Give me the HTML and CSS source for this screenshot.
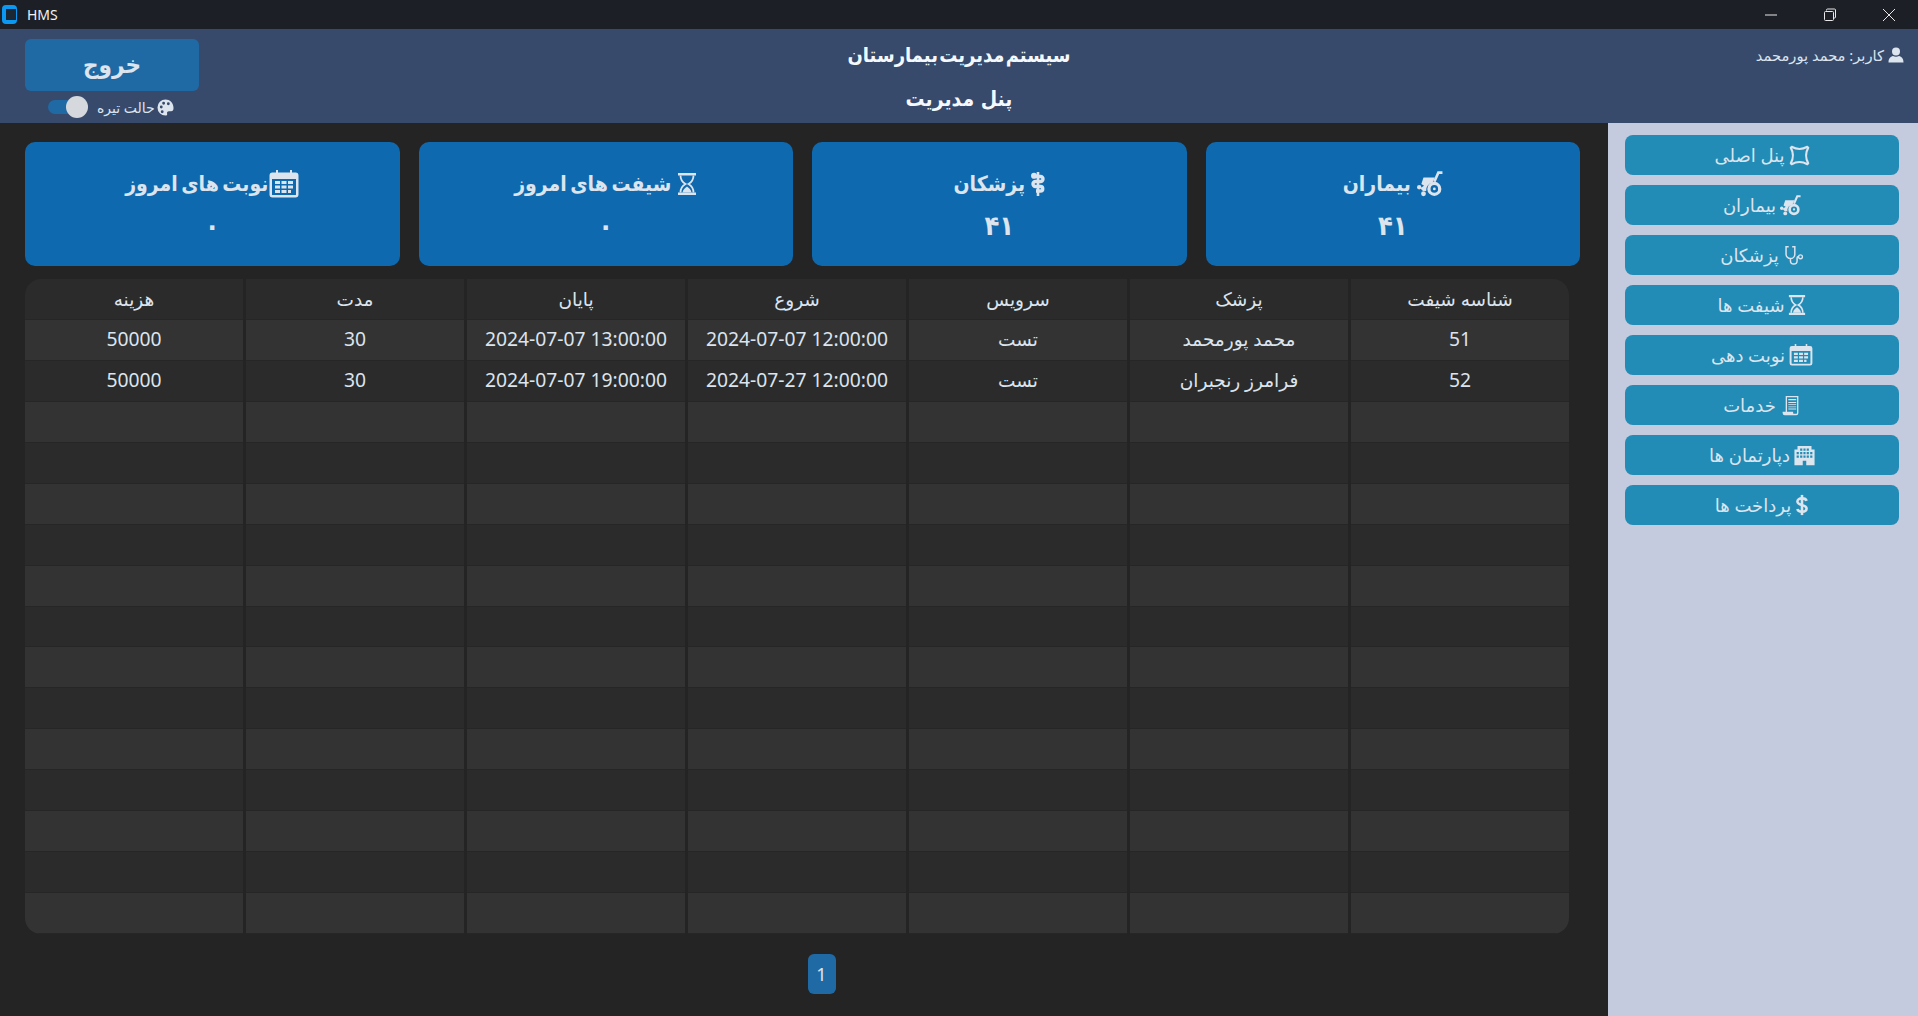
FILE: index.html
```html
<!DOCTYPE html>
<html lang="fa">
<head>
    <meta charset="UTF-8">
    <title>HMS</title>
    <link rel="stylesheet" href="styles.css">
</head>
<body>
    <!-- Icon set -->
    <svg class="icon-defs" width="0" height="0">
        <symbol id="i-burst" viewBox="0 0 24 24">
            <path d="M3 2Q12 7 21 2M22 3Q17 12 22 21M21 22Q12 17 3 22M2 21Q7 12 2 3" fill="none" stroke="currentColor" stroke-width="2.400" stroke-linecap="round"/>
        </symbol>
        <symbol id="i-wheelchair" viewBox="0 0 24 24">
            <path d="M23.500 1.500h-3.800L16 10" fill="none" stroke="currentColor" stroke-width="2.400"/>
            <path d="M6 6h10.500l-2.300 5a6.500 6.500 0 0 0-5.700 7.500H5.500L3 16l3.500-2.500L4 12z" fill="currentColor"/>
            <circle cx="16" cy="16.500" r="5" fill="none" stroke="currentColor" stroke-width="3"/>
            <circle cx="16" cy="16.500" r="1.300" fill="currentColor"/>
            <circle cx="2" cy="15" r="2" fill="currentColor"/>
            <circle cx="6" cy="21" r="2.200" fill="currentColor"/>
        </symbol>
        <symbol id="i-staff" viewBox="0 0 14 24">
            <path d="M7 0v24" stroke="currentColor" stroke-width="2.600"/>
            <path d="M1 4.500h8.500a2.300 2.300 0 0 1 0 5H4.500a2.300 2.300 0 0 0 0 5h5a2 2 0 0 1 0 4.500H5" fill="none" stroke="currentColor" stroke-width="3.400"/>
            <circle cx="3" cy="3.800" r="3" fill="currentColor"/>
        </symbol>
        <symbol id="i-stethoscope" viewBox="0 0 24 24">
            <path d="M6.500 2H3.500v8.500a5 5 0 0 0 10 0V2h-3M8.500 15.500V18a3.800 3.800 0 0 0 7.600 0v-3a2 2 0 0 1 1.500-2" fill="none" stroke="currentColor" stroke-width="1.700"/>
            <circle cx="20" cy="13.500" r="2.200" fill="none" stroke="currentColor" stroke-width="1.500"/>
        </symbol>
        <symbol id="i-hourglass" viewBox="0 0 20 24">
            <path d="M1 1h18v2.500H1zM1 20.500h18V23H1z" fill="currentColor"/>
            <path d="M3.500 3.500c0 4 1.500 6.500 5 8.500-3.500 2-5 4.500-5 8.500M16.500 3.500c0 4-1.500 6.500-5 8.500 3.500 2 5 4.500 5 8.500" fill="none" stroke="currentColor" stroke-width="1.800"/>
            <path d="M5.500 20.500c.5-3 2.500-4.500 4.500-6 2 1.500 4 3 4.500 6z" fill="currentColor"/>
        </symbol>
        <symbol id="i-calendar" viewBox="0 0 30 28">
            <path d="M3.500 2.500h23a3 3 0 0 1 3 3v19a3 3 0 0 1-3 3h-23a3 3 0 0 1-3-3v-19a3 3 0 0 1 3-3zM3 9v15.500a.5.500 0 0 0 .5.500h23a.5.500 0 0 0 .5-.5V9z" fill="currentColor" fill-rule="evenodd"/>
            <path d="M8 0v4M22 0v4" stroke="currentColor" stroke-width="2" stroke-linecap="round"/>
            <path d="M6 11h5v3H6zM12.500 11h5v3h-5zM19 11h5v3h-5zM6 15.500h5v3H6zM12.500 15.500h5v3h-5zM19 15.500h5v3h-5zM6 20h5v3H6zM12.500 20h5v3h-5zM19 20h3v3h-3z" fill="currentColor"/>
        </symbol>
        <symbol id="i-receipt" viewBox="0 0 20 24">
            <path d="M4.500 1h14.500v19.500a2.500 2.500 0 0 1-2.500 2.500h-13a2.500 2.500 0 0 1-2.500-2.500V19h3.500zM6 2.500V19h7v1.500c0 .5.200 1 .5 1h3c.5 0 1-.5 1-1v-18z" fill="currentColor" fill-rule="evenodd"/>
            <path d="M7.500 4.500h9v1.500h-9zM7.500 8h9v1h-9zM7.500 10.500h9v1h-9zM7.500 13h9v1h-9zM7.500 15.500h9v1h-9z" fill="currentColor"/>
        </symbol>
        <symbol id="i-building" viewBox="0 0 24 24">
            <path d="M4 1h16v4h3.500v18H14v-5h-4v5H.5V5H4zM7 4v2.500h2.500V4zM10.800 4v2.500h2.400V4zM14.500 4v2.500H17V4zM3 8v2.500h2.500V8zM7 8v2.500h2.500V8zM10.800 8v2.500h2.400V8zM14.500 8v2.500H17V8zM18.500 8v2.500H21V8zM3 12v2.500h2.500V12zM7 12v2.500h2.500V12zM10.800 12v2.500h2.400V12zM14.500 12v2.500H17V12zM18.500 12v2.500H21V12z" fill="currentColor" fill-rule="evenodd"/>
        </symbol>
        <symbol id="i-dollar" viewBox="0 0 14 24">
            <path d="M12 7.500C11.500 5.500 9.500 4.800 7 4.800c-3 0-5 1.300-5 3.500 0 5 10 2.700 10 7.500 0 2.200-2 3.500-5 3.500-2.700 0-4.600-1-5-3" fill="none" stroke="currentColor" stroke-width="2.800"/>
            <path d="M7 1v22" stroke="currentColor" stroke-width="2.800"/>
        </symbol>
        <symbol id="i-palette" viewBox="0 0 18 18">
            <path d="M9 .5a8.500 8.500 0 1 0 0 17c1.500 0 2-1 1.700-2-.4-1.300.3-2.500 2-2.500h2.300c1.500 0 2.500-1.300 2.500-3.500C17.500 4 13.500.5 9 .5zM4.500 7a1.500 1.500 0 1 1 0 3 1.500 1.500 0 0 1 0-3zM7 3a1.500 1.500 0 1 1 0 3 1.500 1.500 0 0 1 0-3zM12 3.500a1.500 1.500 0 1 1 0 3 1.500 1.500 0 0 1 0-3zM5.500 12a1.500 1.500 0 1 1 0 3 1.500 1.500 0 0 1 0-3z" fill="currentColor" fill-rule="evenodd"/>
        </symbol>
        <symbol id="i-user" viewBox="0 0 16 16">
            <circle cx="8" cy="4.500" r="4" fill="currentColor"/>
            <path d="M5 9c-2.500.5-4.500 2.500-4.500 6.500h15C15.500 11.500 13.500 9.500 11 9c-1.500 1-4.500 1-6 0z" fill="currentColor"/>
        </symbol>
    </svg>

    <div class="title-bar">
        <div class="app-name">
            <span class="app-logo"></span>
            <span>HMS</span>
        </div>
        <div class="win-buttons">
            <span class="win-btn">
                <svg width="14" height="14" viewBox="0 0 14 14"><path d="M1 7h12" stroke="#e8e8e8" fill="none"/></svg>
            </span>
            <span class="win-btn">
                <svg width="14" height="14" viewBox="0 0 14 14"><path d="M3.500 2.500V2a1 1 0 0 1 1-1h7a1 1 0 0 1 1 1v7a1 1 0 0 1-1 1h-.5M1.500 4.500a1 1 0 0 1 1-1h7a1 1 0 0 1 1 1v7a1 1 0 0 1-1 1h-7a1 1 0 0 1-1-1z" stroke="#e8e8e8" fill="none"/></svg>
            </span>
            <span class="win-btn">
                <svg width="14" height="14" viewBox="0 0 14 14"><path d="M1 1l12 12M13 1L1 13" stroke="#e8e8e8" fill="none"/></svg>
            </span>
        </div>
    </div>

    <div class="header">
        <div class="header-left">
            <button class="logout-btn">خروج</button>
            <div class="theme-row">
                <span class="switch"><span class="switch-thumb"></span></span>
                <span class="theme-label">حالت تیره</span>
                <svg class="theme-icon"><use href="#i-palette"/></svg>
            </div>
        </div>
        <div class="header-title">
            <div class="title-main">سیستم مدیریت بیمارستان</div>
            <div>پنل مدیریت</div>
        </div>
        <div class="header-user">
            <svg class="user-icon"><use href="#i-user"/></svg>
            <span>کاربر: محمد پورمحمد</span>
        </div>
    </div>

    <div class="main">
        <div class="content">
            <div class="cards">
                <div class="card">
                    <div class="card-title"><svg class="card-icon icon-calendar"><use href="#i-calendar"/></svg>نوبت های امروز</div>
                    <div class="card-value">۰</div>
                </div>
                <div class="card">
                    <div class="card-title"><svg class="card-icon icon-hourglass"><use href="#i-hourglass"/></svg>شیفت های امروز</div>
                    <div class="card-value">۰</div>
                </div>
                <div class="card">
                    <div class="card-title"><svg class="card-icon icon-staff"><use href="#i-staff"/></svg>پزشکان</div>
                    <div class="card-value">۴۱</div>
                </div>
                <div class="card">
                    <div class="card-title"><svg class="card-icon icon-chair"><use href="#i-wheelchair"/></svg>بیماران</div>
                    <div class="card-value">۴۱</div>
                </div>
            </div>

            <div class="table" dir="rtl">
                <div class="row head">
                    <div>شناسه شیفت</div><div>پزشک</div><div>سرویس</div><div>شروع</div><div>پایان</div><div>مدت</div><div>هزینه</div>
                </div>
                <div class="row">
                    <div class="num">51</div><div>محمد پورمحمد</div><div>تست</div><div class="num" dir="ltr">2024-07-07 12:00:00</div><div class="num" dir="ltr">2024-07-07 13:00:00</div><div class="num">30</div><div class="num">50000</div>
                </div>
                <div class="row">
                    <div class="num">52</div><div>فرامرز رنجبران</div><div>تست</div><div class="num" dir="ltr">2024-07-27 12:00:00</div><div class="num" dir="ltr">2024-07-07 19:00:00</div><div class="num">30</div><div class="num">50000</div>
                </div>
                <div class="row"><div></div><div></div><div></div><div></div><div></div><div></div><div></div></div>
                <div class="row"><div></div><div></div><div></div><div></div><div></div><div></div><div></div></div>
                <div class="row"><div></div><div></div><div></div><div></div><div></div><div></div><div></div></div>
                <div class="row"><div></div><div></div><div></div><div></div><div></div><div></div><div></div></div>
                <div class="row"><div></div><div></div><div></div><div></div><div></div><div></div><div></div></div>
                <div class="row"><div></div><div></div><div></div><div></div><div></div><div></div><div></div></div>
                <div class="row"><div></div><div></div><div></div><div></div><div></div><div></div><div></div></div>
                <div class="row"><div></div><div></div><div></div><div></div><div></div><div></div><div></div></div>
                <div class="row"><div></div><div></div><div></div><div></div><div></div><div></div><div></div></div>
                <div class="row"><div></div><div></div><div></div><div></div><div></div><div></div><div></div></div>
                <div class="row"><div></div><div></div><div></div><div></div><div></div><div></div><div></div></div>
                <div class="row"><div></div><div></div><div></div><div></div><div></div><div></div><div></div></div>
                <div class="row"><div></div><div></div><div></div><div></div><div></div><div></div><div></div></div>
            </div>

            <div class="pagination">
                <span class="page-btn">1</span>
            </div>
        </div>

        <div class="sidebar">
            <a class="side-btn" href="#"><svg class="side-icon"><use href="#i-burst"/></svg>پنل اصلی</a>
            <a class="side-btn" href="#"><svg class="side-icon"><use href="#i-wheelchair"/></svg>بیماران</a>
            <a class="side-btn" href="#"><svg class="side-icon"><use href="#i-stethoscope"/></svg>پزشکان</a>
            <a class="side-btn" href="#"><svg class="side-icon side-glass"><use href="#i-hourglass"/></svg>شیفت ها</a>
            <a class="side-btn" href="#"><svg class="side-icon side-calendar"><use href="#i-calendar"/></svg>نوبت دهی</a>
            <a class="side-btn" href="#"><svg class="side-icon"><use href="#i-receipt"/></svg>خدمات</a>
            <a class="side-btn" href="#"><svg class="side-icon"><use href="#i-building"/></svg>دپارتمان ها</a>
            <a class="side-btn" href="#"><svg class="side-icon side-narrow"><use href="#i-dollar"/></svg>پرداخت ها</a>
        </div>
    </div>
</body>
</html>
```

FILE: styles.css
```css
* {
    box-sizing: border-box;
}

html, body {
    height: 100%;
}

body {
    margin: 0;
    display: flex;
    flex-direction: column;
    overflow: hidden;
    font-family: "Noto Sans", "DejaVu Sans", sans-serif;
    background: #242424;
    color: #dce4ee;
}

.icon-defs {
    position: absolute;
}

/* Title bar */
.title-bar {
    height: 29px;
    display: flex;
    justify-content: space-between;
    align-items: center;
    background: #1d1f26;
    color: #f2f2f2;
    font-size: 14px;
}

.app-name {
    display: flex;
    align-items: center;
    gap: 10px;
    padding-left: 2px;
}

.app-logo {
    width: 15px;
    height: 19px;
    border-radius: 4px;
    background: #0a98f2;
    border: 4px solid #0a98f2;
    border-right-width: 1px;
    box-shadow: inset 0 0 0 8px #1b2733;
}

.win-buttons {
    display: flex;
}

.win-btn {
    width: 59px;
    height: 29px;
    display: flex;
    align-items: center;
    justify-content: center;
}

/* Header */
.header {
    height: 94px;
    display: grid;
    grid-template-columns: 1fr auto 1fr;
    background: #374a6b;
}

.header-left {
    width: 174px;
    margin-left: 25px;
    padding-top: 10px;
}

.logout-btn {
    width: 174px;
    height: 52px;
    border: 0;
    border-radius: 6px;
    background: #1f6aa5;
    color: #dce4ee;
    font-family: "DejaVu Sans Condensed", "DejaVu Sans", sans-serif;
    font-size: 24px;
    font-weight: bold;
}

.theme-row {
    display: flex;
    align-items: center;
    height: 22px;
    margin-top: 5px;
    padding-left: 23px;
    font-size: 14px;
}

.switch {
    position: relative;
    width: 32px;
    height: 14px;
    border-radius: 7px;
    background: #1f6aa5;
    margin-right: 9px;
}

.switch-thumb {
    position: absolute;
    left: 18px;
    top: -4px;
    width: 22px;
    height: 22px;
    border-radius: 50%;
    background: #d5d9de;
}

.theme-label {
    width: 56px;
    margin-left: 8px;
    white-space: nowrap;
}

.theme-icon {
    width: 17px;
    height: 17px;
    margin-left: 4px;
}

.header-title {
    padding-top: 4px;
    text-align: center;
    font-family: "DejaVu Sans Condensed", "DejaVu Sans", sans-serif;
    font-size: 21px;
    font-weight: bold;
    line-height: 44px;
    color: #f4f9ff;
}

.title-main {
    font-size: 20px;
    word-spacing: -5px;
}

.header-user {
    display: flex;
    flex-direction: row-reverse;
    justify-content: flex-start;
    align-items: center;
    gap: 4px;
    height: 20px;
    margin-top: 16px;
    padding-right: 14px;
    font-size: 14.700px;
}

.user-icon {
    width: 16px;
    height: 16px;
}

/* Main area */
.main {
    flex: 1;
    display: flex;
    min-height: 0;
}

.content {
    flex: 1;
    padding: 19px 28px 0 25px;
}

.cards {
    display: grid;
    grid-template-columns: repeat(4, 1fr);
    gap: 19px;
}

.card {
    height: 124px;
    padding-top: 26px;
    border-radius: 10px;
    background: #0f69ae;
    text-align: center;
}

.card-title {
    display: flex;
    flex-direction: row-reverse;
    justify-content: center;
    align-items: center;
    gap: 6px;
    height: 32px;
    font-family: "DejaVu Sans Condensed", "DejaVu Sans", sans-serif;
    font-size: 21px;
    font-weight: bold;
    word-spacing: -3px;
}

.card-value {
    margin-top: 6px;
    font-family: "DejaVu Sans Condensed", "DejaVu Sans", sans-serif;
    font-size: 27px;
    font-weight: bold;
    line-height: 40px;
}

.card-icon {
    width: 26px;
    height: 26px;
}

.icon-calendar {
    width: 30px;
    height: 28px;
    margin-left: -5px;
}

.icon-hourglass {
    width: 20px;
    height: 24px;
}

.icon-staff {
    width: 14px;
    height: 24px;
}

/* Table */
.table {
    width: 1544px;
    height: 655px;
    margin-top: 13px;
    display: flex;
    flex-direction: column;
    border-radius: 16px;
    overflow: hidden;
}

.row {
    flex: 1;
    display: grid;
    grid-template-columns: repeat(7, 1fr);
    column-gap: 3px;
    min-height: 0;
}

.row > div {
    display: flex;
    align-items: center;
    justify-content: center;
    padding-bottom: 2px;
    border-bottom: 1px solid #262626;
    background: #333333;
    font-size: 18.500px;
}

.row > div.num {
    font-size: 19.300px;
}

.row:nth-child(odd) > div {
    background: #2b2b2b;
}

.row.head > div {
    padding-bottom: 0;
    background: #2b2b2b;
}

/* Pagination */
.pagination {
    display: flex;
    justify-content: center;
    margin: 20px 0 0 38px;
}

.page-btn {
    width: 28px;
    height: 40px;
    display: flex;
    align-items: center;
    justify-content: center;
    border-radius: 6px;
    background: #1f6aa5;
    font-size: 18px;
}

/* Sidebar */
.sidebar {
    width: 310px;
    padding: 12px 19px 0 17px;
    display: flex;
    flex-direction: column;
    gap: 10px;
    background: #c5cbdf;
}

.side-btn {
    height: 40px;
    display: flex;
    flex-direction: row-reverse;
    align-items: center;
    justify-content: center;
    gap: 4px;
    border-radius: 8px;
    background: #228cb6;
    color: #dce4ee;
    text-decoration: none;
    font-size: 18px;
}

.side-icon {
    width: 21px;
    height: 21px;
}

.side-glass {
    width: 18px;
    height: 22px;
}

.side-calendar {
    width: 24px;
    height: 22px;
}

.side-narrow {
    width: 14px;
    height: 22px;
}
```
